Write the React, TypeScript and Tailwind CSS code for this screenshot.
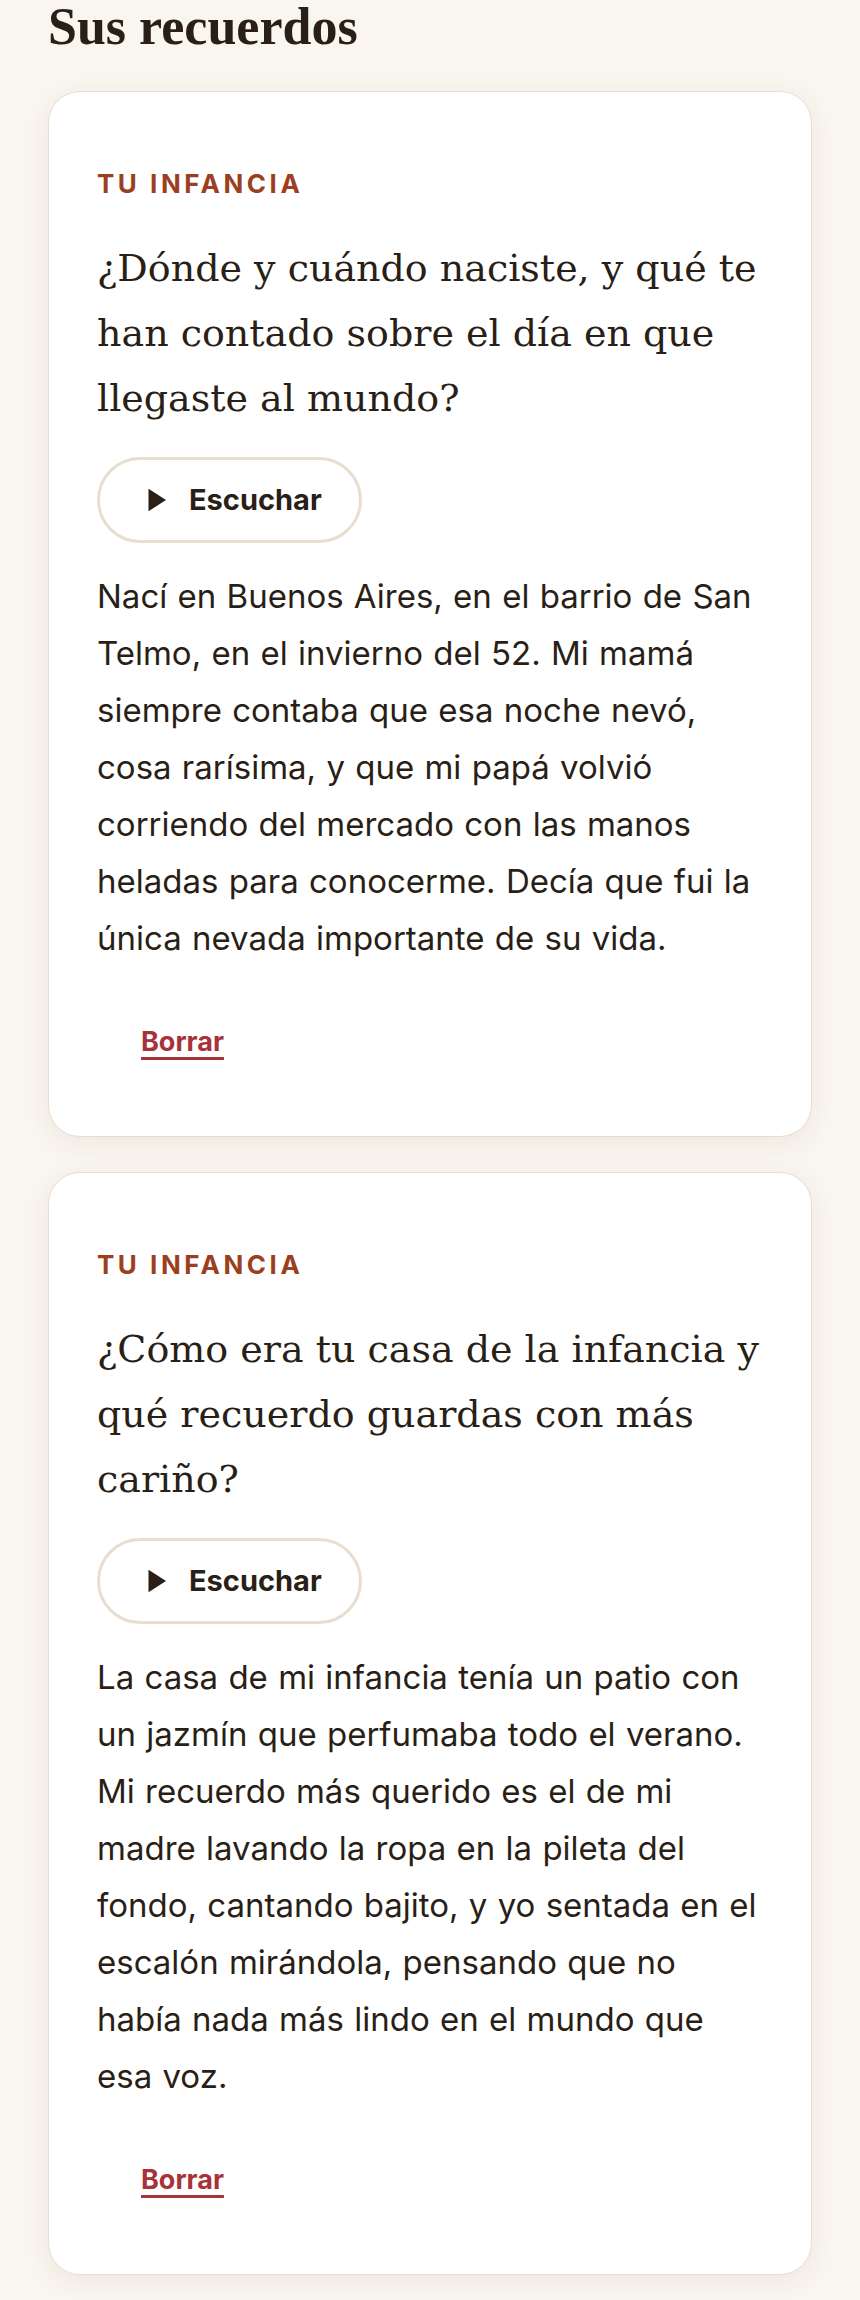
import React from 'react';

interface Memory {
  id: number;
  category: string;
  question: string;
  answer: string;
}

const memories: Memory[] = [
  {
    id: 1,
    category: 'Tu infancia',
    question: '¿Dónde y cuándo naciste, y qué te han contado sobre el día en que llegaste al mundo?',
    answer:
      'Nací en Buenos Aires, en el barrio de San Telmo, en el invierno del 52. Mi mamá siempre contaba que esa noche nevó, cosa rarísima, y que mi papá volvió corriendo del mercado con las manos heladas para conocerme. Decía que fui la única nevada importante de su vida.',
  },
  {
    id: 2,
    category: 'Tu infancia',
    question: '¿Cómo era tu casa de la infancia y qué recuerdo guardas con más cariño?',
    answer:
      'La casa de mi infancia tenía un patio con un jazmín que perfumaba todo el verano. Mi recuerdo más querido es el de mi madre lavando la ropa en la pileta del fondo, cantando bajito, y yo sentada en el escalón mirándola, pensando que no había nada más lindo en el mundo que esa voz.',
  },
];

const PlayIcon = () => (
  <svg width="30" height="30" viewBox="0 0 24 24" aria-hidden="true">
    <polygon points="6 3 20 12 6 21" fill="currentColor" />
  </svg>
);

const MemoryCard: React.FC<{ memory: Memory }> = ({ memory }) => (
  <article className="rounded-[32px] border border-[#e9ddd0] bg-white px-12 pt-[76px] pb-[64px] shadow-[0_6px_24px_rgba(110,80,50,0.08)]">
    {/* Category */}
    <p className="font-['Inter',sans-serif] text-[26px] leading-[32px] font-bold uppercase tracking-[0.135em] text-[#9c3f1f]">
      {memory.category}
    </p>

    {/* Question */}
    <h2 className="mt-9 font-['DejaVu_Serif',serif] text-[38px] leading-[65px] text-[#2a1f17]">
      {memory.question}
    </h2>

    <button className="mt-[26px] flex h-[86px] items-center gap-[18px] rounded-full border-[3px] border-[#e9ddd0] bg-white pl-[41px] pr-[37px] font-['Inter',sans-serif] text-[29px] font-bold text-[#2a1f17]">
      <PlayIcon />
      <span>Escuchar</span>
    </button>

    {/* Answer */}
    <p className="mt-[25px] font-['Inter',sans-serif] text-[33px] leading-[57px] [word-spacing:1px] text-[#2a1f17]">
      {memory.answer}
    </p>

    <button className="mt-[45px] px-[44px] py-3 font-['Inter',sans-serif] text-[27px] leading-[36px] font-bold text-[#a8323a] underline decoration-[3px] underline-offset-[6px]">
      Borrar
    </button>
  </article>
);

export default function App() {
  return (
    <div className="min-h-screen bg-[#f9f5ef] px-12 pt-0 pb-7">
      <h1 className="font-['Liberation_Serif',serif] text-[52px] leading-[54px] font-bold text-[#2a1f17]">
        Sus recuerdos
      </h1>
      <div className="mt-[37px] flex flex-col gap-[35px]">
        {memories.map((m) => (
          <MemoryCard key={m.id} memory={m} />
        ))}
      </div>
    </div>
  );
}
